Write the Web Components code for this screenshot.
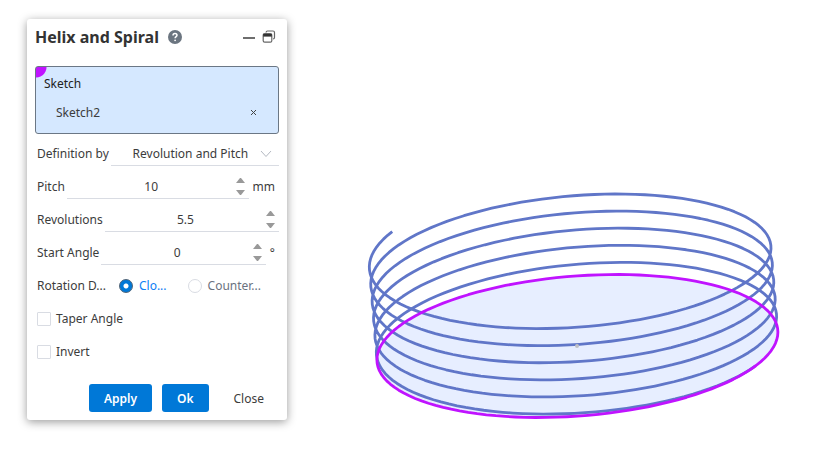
<!DOCTYPE html>
<html lang="en">
<head>
<meta charset="utf-8">
<meta name="viewport" content="width=device-width, initial-scale=1">
<title>Helix and Spiral</title>
<style>
  :root {
    --accent: #0078d7;
    --pick: #c013ff;
    --text: #3c3c3c;
    --line: #d9dce3;
    --coil: #6076c8;
  }

  body {
    margin: 0;
    background: #fff;
    color: var(--text);
    font: 12px/21px "Noto Sans", "Open Sans", sans-serif;
  }
</style>
</head>
<body>
<cad-workspace>
  <tool-dialog slot="panel" title-text="Helix and Spiral">
    <selection-box label="Sketch" item="Sketch2"></selection-box>
    <select-field label="Definition by" value="Revolution and Pitch"></select-field>
    <number-field label="Pitch" value="10" unit="mm"></number-field>
    <number-field label="Revolutions" value="5.5"></number-field>
    <number-field label="Start Angle" value="0" unit="°"></number-field>
    <radio-field label="Rotation D..." options="Clo...|Counter..."></radio-field>
    <check-field label="Taper Angle"></check-field>
    <check-field label="Invert"></check-field>
    <dialog-button slot="actions" primary>Apply</dialog-button>
    <dialog-button slot="actions" primary>Ok</dialog-button>
    <dialog-button slot="actions">Close</dialog-button>
  </tool-dialog>
  <helix-view></helix-view>
</cad-workspace>

<script>
class CadWorkspace extends HTMLElement {
  constructor() {
    super();
    this.attachShadow({ mode: "open" });
    this.shadowRoot.innerHTML = `
      <style>
        :host {
          display: flex;
          align-items: flex-start;
          min-height: 100vh;
        }

        .panel {
          flex: none;
          padding: 19px 0 19px 27px;
        }

        .view {
          flex: 1;
          min-width: 0;
        }
      </style>
      <div class="panel"><slot name="panel"></slot></div>
      <main class="view"><slot></slot></main>
    `;
  }
}

class ToolDialog extends HTMLElement {
  connectedCallback() {
    this.attachShadow({ mode: "open" });
    this.shadowRoot.innerHTML = `
      <style>
        :host {
          display: block;
          box-sizing: border-box;
          width: 260px;
          padding: 8px;
          background: #fff;
          border-radius: 3px;
          box-shadow: 0 2px 10px rgba(0, 0, 0, 0.4);
        }

        header {
          display: flex;
          align-items: center;
          height: 20px;
          margin-bottom: 19px;
        }

        h1 {
          margin: 0;
          font-size: 16px;
          line-height: 20px;
          font-weight: 700;
          color: #333;
        }

        button {
          display: flex;
          padding: 0;
          border: 0;
          background: none;
        }

        .help {
          margin-left: 9px;
        }

        .tools {
          display: flex;
          gap: 6px;
          margin-left: auto;
          padding-right: 3px;
        }

        footer {
          display: flex;
          gap: 10px;
          justify-content: flex-end;
          margin-top: 16px;
        }
      </style>
      <header>
        <h1>${this.getAttribute("title-text")}</h1>
        <button class="help" type="button" aria-label="Help">
          <svg width="14" height="14" viewBox="0 0 14 14">
            <circle cx="7" cy="7" r="7" fill="#6b7580"/>
            <path d="M5 5.6C5 4.2 5.8 3.5 7 3.5S9 4.2 9 5.3C9 6.6 7.1 6.7 7.1 8.3" fill="none" stroke="#fff" stroke-width="1.5"/>
            <circle cx="7.1" cy="10.3" r="0.9" fill="#fff"/>
          </svg>
        </button>
        <div class="tools">
          <button type="button" aria-label="Minimize">
            <svg width="14" height="14" viewBox="0 0 14 14">
              <path d="M1 8H13" stroke="#4a4a4a" stroke-width="1.6"/>
            </svg>
          </button>
          <button type="button" aria-label="Restore">
            <svg width="14" height="14" viewBox="0 0 14 14" fill="none" stroke="#666" stroke-width="1.2">
              <path d="M4 2.5Q4.2 1 5.500 1H11Q12.500 1 12.500 2.500V7.500Q12.500 9 11 9"/>
              <rect x="1.2" y="3.6" width="8.6" height="8.6" rx="1.5"/>
              <path d="M1.2 5.3H9.800" stroke="#333" stroke-width="2.600"/>
            </svg>
          </button>
        </div>
      </header>
      <slot></slot>
      <footer><slot name="actions"></slot></footer>
    `;
  }
}

class SelectionBox extends HTMLElement {
  connectedCallback() {
    this.attachShadow({ mode: "open" });
    this.shadowRoot.innerHTML = `
      <style>
        :host {
          display: block;
          box-sizing: border-box;
          margin-bottom: 3px;
          padding: 6px 8px 10px;
          border: 1px solid #6b7785;
          border-radius: 3px;
          background: radial-gradient(circle at 0 0, var(--pick) 10px, #d5e8ff 11px);
        }

        .label {
          color: #222;
        }

        .item {
          display: flex;
          justify-content: space-between;
          margin-top: 8px;
          padding: 0 12px;
        }

        button {
          display: flex;
          align-items: center;
          padding: 0 1px;
          border: 0;
          background: none;
        }
      </style>
      <div class="label">${this.getAttribute("label")}</div>
      <div class="item">
        <span>${this.getAttribute("item")}</span>
        <button type="button" aria-label="Remove">
          <svg width="7" height="7" viewBox="0 0 7 7">
            <path d="M1 1L6 6M6 1L1 6" stroke="#444"/>
          </svg>
        </button>
      </div>
    `;
  }
}

// Shared look of the rows with a label and an underlined field
const rowStyle = `
  :host {
    display: flex;
    align-items: center;
    height: 33px;
    padding-left: 2px;
  }

  label {
    flex: none;
  }

  .field {
    display: flex;
    align-items: center;
    flex: 1;
    min-width: 0;
    height: 22px;
    margin-left: 2px;
    padding-top: 1px;
    border-bottom: 1px solid var(--line);
  }

  input,
  select {
    flex: 1;
    min-width: 0;
    width: 0;
    height: 21px;
    padding: 0;
    border: 0;
    outline: 0;
    background: none;
    color: inherit;
    font: inherit;
    text-align: center;
  }
`;

class SelectField extends HTMLElement {
  connectedCallback() {
    this.attachShadow({ mode: "open" });
    this.shadowRoot.innerHTML = `
      <style>
        ${rowStyle}

        select {
          appearance: none;
          text-align-last: center;
          padding-left: 10px;
        }

        svg {
          flex: none;
          margin-right: 7px;
        }
      </style>
      <label for="field">${this.getAttribute("label")}</label>
      <div class="field">
        <select id="field"><option>${this.getAttribute("value")}</option></select>
        <svg width="12" height="8" viewBox="0 0 12 8">
          <path d="M1 1L6 6.5L11 1" fill="none" stroke="#b4b9c2"/>
        </svg>
      </div>
    `;
  }
}

class NumberField extends HTMLElement {
  connectedCallback() {
    const unit = this.getAttribute("unit");
    this.attachShadow({ mode: "open" });
    this.shadowRoot.innerHTML = `
      <style>
        ${rowStyle}

        .steps {
          display: flex;
          flex-direction: column;
          gap: 7px;
          margin-right: 4px;
        }

        .steps button {
          display: flex;
          padding: 0;
          border: 0;
          background: none;
        }

        .unit {
          padding: 0 4px;
        }
      </style>
      <label for="field">${this.getAttribute("label")}</label>
      <div class="field">
        <input id="field" type="text" inputmode="decimal" value="${this.getAttribute("value")}">
        <div class="steps">
          <button type="button" aria-label="Increase">
            <svg width="9" height="5" viewBox="0 0 9 5"><path d="M0 5L4 0H5L9 5Z" fill="#999"/></svg>
          </button>
          <button type="button" aria-label="Decrease">
            <svg width="9" height="5" viewBox="0 0 9 5"><path d="M0 0L4 5H5L9 0Z" fill="#999"/></svg>
          </button>
        </div>
      </div>
      ${unit ? `<span class="unit">${unit}</span>` : ""}
    `;

    const input = this.shadowRoot.querySelector("input");
    const [up, down] = this.shadowRoot.querySelectorAll("button");
    up.addEventListener("click", () => (input.value = Number(input.value) + 1));
    down.addEventListener("click", () => (input.value = Number(input.value) - 1));
  }
}

class RadioField extends HTMLElement {
  connectedCallback() {
    const options = this.getAttribute("options").split("|");
    this.attachShadow({ mode: "open" });
    this.shadowRoot.innerHTML = `
      <style>
        ${rowStyle}

        .choices {
          display: flex;
          gap: 21px;
          margin-left: 13px;
        }

        label {
          display: flex;
          align-items: center;
          gap: 6px;
          color: #6b7280;
        }

        label:has(:checked) {
          color: #0d80f5;
        }

        input {
          appearance: none;
          flex: none;
          box-sizing: border-box;
          width: 14px;
          height: 14px;
          margin: 0;
          border: 1px solid var(--line);
          border-radius: 50%;
        }

        input:checked {
          border-color: #4c6278;
          background: radial-gradient(circle, #fff 2px, var(--accent) 3px);
        }
      </style>
      <span id="name">${this.getAttribute("label")}</span>
      <div class="choices" role="radiogroup" aria-labelledby="name">
        ${options
          .map((text, i) => `<label><input type="radio" name="choice" ${i === 0 ? "checked" : ""}>${text}</label>`)
          .join("")}
      </div>
    `;
  }
}

class CheckField extends HTMLElement {
  connectedCallback() {
    this.attachShadow({ mode: "open" });
    this.shadowRoot.innerHTML = `
      <style>
        :host {
          display: flex;
          align-items: center;
          height: 33px;
          padding-left: 2px;
        }

        label {
          display: flex;
          align-items: center;
          gap: 5px;
        }

        input {
          appearance: none;
          box-sizing: border-box;
          width: 14px;
          height: 14px;
          margin: 0;
          border: 1px solid var(--line);
          border-radius: 1px;
        }

        input:checked {
          background: var(--accent);
        }
      </style>
      <label><input type="checkbox">${this.getAttribute("label")}</label>
    `;
  }
}

class DialogButton extends HTMLElement {
  constructor() {
    super();
    this.attachShadow({ mode: "open" });
    this.shadowRoot.innerHTML = `
      <style>
        :host {
          display: block;
        }

        button {
          height: 28px;
          padding: 0 15px;
          border: 0;
          border-radius: 3px;
          background: none;
          color: inherit;
          font: inherit;
        }

        :host([primary]) button {
          background: var(--accent);
          color: #fff;
          font-weight: 600;
        }
      </style>
      <button type="button"><slot></slot></button>
    `;
  }
}

class HelixView extends HTMLElement {
  // Point on the projected circle at angle t, lifted by a number of turns
  point(t, turns) {
    const x = 577.4 + 200.5 * Math.cos(t) - 1.4 * turns;
    const y = 346 + 71.5 * Math.sin(t - 0.195) - 17.1 * turns;
    return `${x.toFixed(2)} ${y.toFixed(2)}`;
  }

  trace(start, turns, lift) {
    const steps = Math.round(turns * 120);
    const points = [];
    for (let i = 0; i <= steps; i++) {
      const n = (i / steps) * turns;
      points.push(this.point(start + n * 2 * Math.PI, lift ? n : 0));
    }
    return "M" + points.join("L");
  }

  connectedCallback() {
    const circle = this.trace(0, 1, false) + "Z";
    const helix = this.trace(0.484, 5.5, true);
    this.attachShadow({ mode: "open" });
    this.shadowRoot.innerHTML = `
      <style>
        :host {
          display: block;
        }

        svg {
          display: block;
          width: 100%;
          height: 100vh;
        }
      </style>
      <svg viewBox="287 0 544 459" fill="none" stroke-width="2.8" stroke-linejoin="round" role="img" aria-label="Helix preview">
        <path d="${circle}" fill="#e7eeff"/>
        <path d="${helix}" stroke="var(--coil)"/>
        <path d="${circle}" stroke="var(--pick)"/>
        <circle cx="577" cy="346" r="2" fill="#bfc0c6"/>
      </svg>
    `;
  }
}

customElements.define("cad-workspace", CadWorkspace);
customElements.define("tool-dialog", ToolDialog);
customElements.define("selection-box", SelectionBox);
customElements.define("select-field", SelectField);
customElements.define("number-field", NumberField);
customElements.define("radio-field", RadioField);
customElements.define("check-field", CheckField);
customElements.define("dialog-button", DialogButton);
customElements.define("helix-view", HelixView);
</script>
</body>
</html>
